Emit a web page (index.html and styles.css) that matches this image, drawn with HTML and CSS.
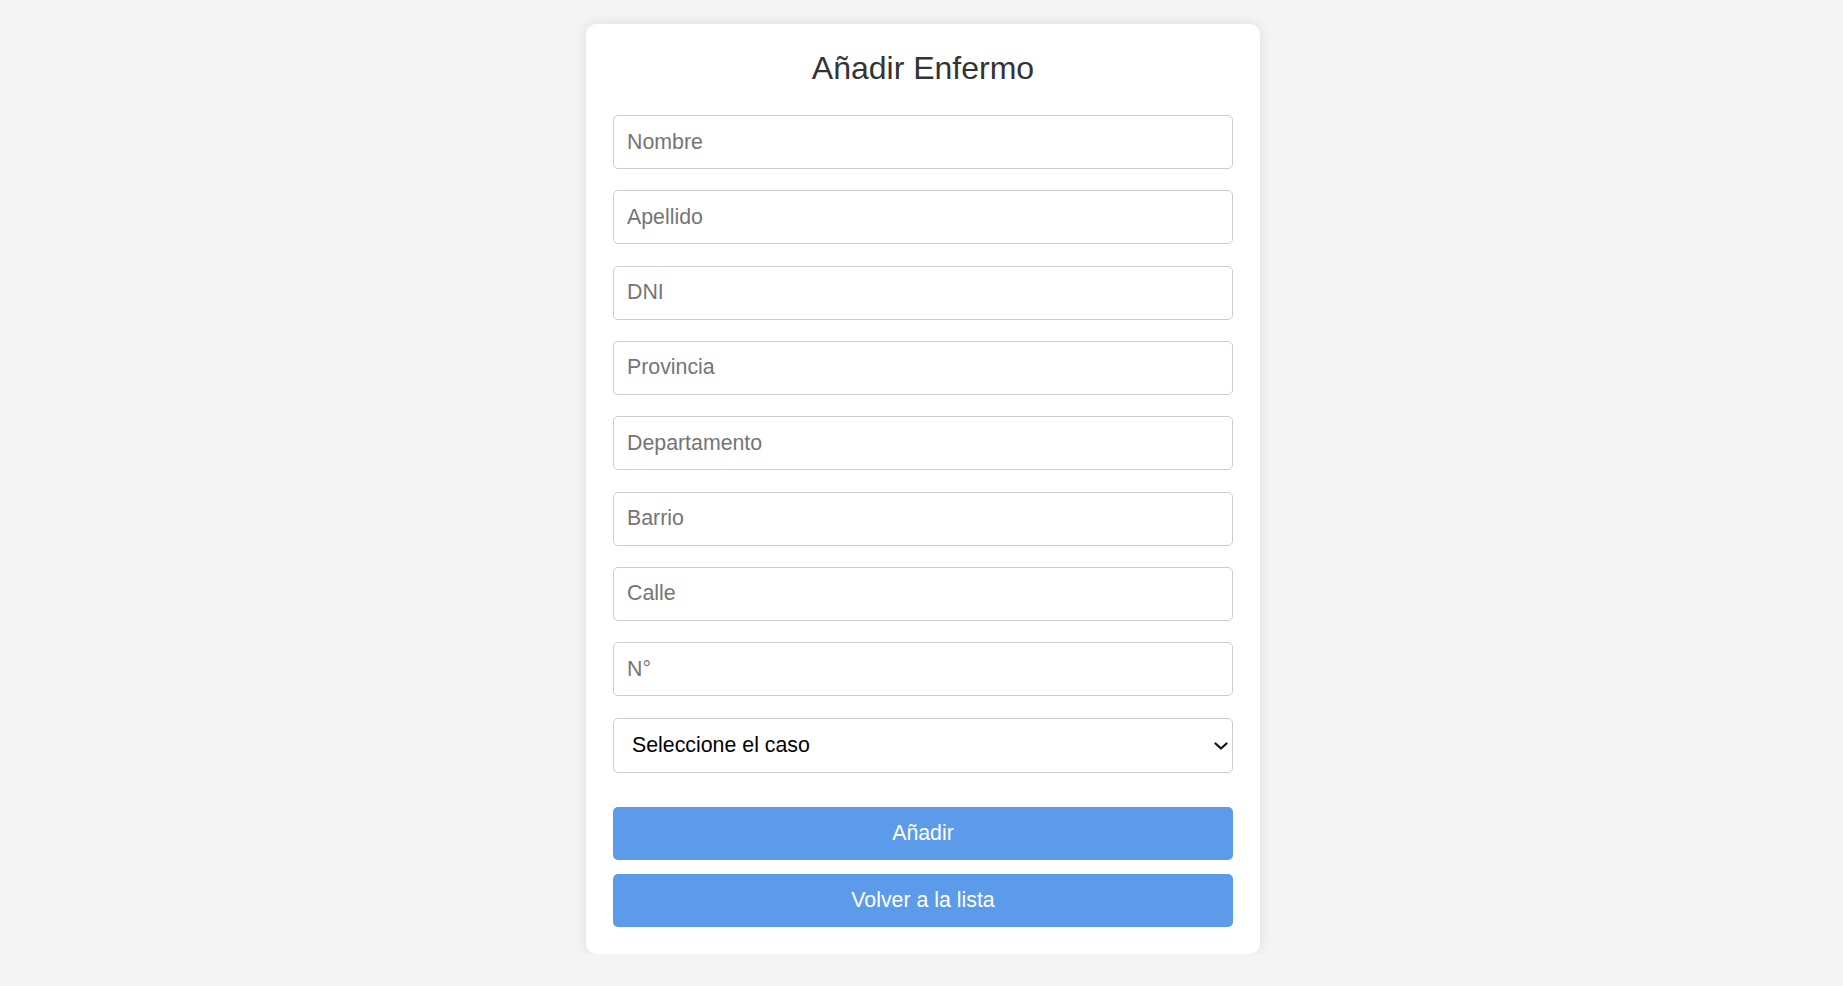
FILE: index.html
```html
<!DOCTYPE html>
<html lang="es">
<head>
<meta charset="utf-8">
<title>Añadir Enfermo</title>
<link rel="stylesheet" href="styles.css">
</head>
<body>
<div class="card">
  <h2 class="title">Añadir Enfermo</h2>
  <form class="form">
    <input class="field" type="text" placeholder="Nombre">
    <input class="field" type="text" placeholder="Apellido">
    <input class="field" type="text" placeholder="DNI">
    <input class="field" type="text" placeholder="Provincia">
    <input class="field" type="text" placeholder="Departamento">
    <input class="field" type="text" placeholder="Barrio">
    <input class="field" type="text" placeholder="Calle">
    <input class="field" type="text" placeholder="N°">
    <div class="select-wrap">
      <select class="field select">
        <option>Seleccione el caso</option>
      </select>
      <svg class="chevron" width="14" height="8" viewBox="0 0 14 8" aria-hidden="true">
        <polyline points="1.5,1.5 7,6.5 12.5,1.5" fill="none" stroke="#111" stroke-width="2.2" stroke-linecap="round" stroke-linejoin="round"/>
      </svg>
    </div>
    <button class="btn btn-first" type="button">Añadir</button>
    <button class="btn" type="button">Volver a la lista</button>
  </form>
</div>
</body>
</html>
```
FILE: styles.css
```css
html, body {
  margin: 0;
  padding: 0;
}
body {
  background: #f4f4f4;
  font-family: "Liberation Sans", Arial, sans-serif;
  padding: 24px 0 0 3px;
}
.card {
  box-sizing: border-box;
  width: 674px;
  margin: 0 auto;
  background: #ffffff;
  border-radius: 10px;
  box-shadow: 0 0 13px rgba(0, 0, 0, 0.1);
  padding: 26px 27px 27px;
}
.title {
  margin: 0 0 29px;
  font-size: 32px;
  font-weight: normal;
  line-height: 36px;
  color: #333333;
  text-align: center;
}
.form {
  display: flex;
  flex-direction: column;
}
.field {
  box-sizing: border-box;
  width: 100%;
  height: 54px;
  margin: 0 0 21.33px;
  padding: 0 13px;
  border: 1px solid #cccccc;
  border-radius: 5px;
  background: #ffffff;
  font-family: "Liberation Sans", Arial, sans-serif;
  font-size: 21.33px;
  color: #000000;
  outline: none;
}
.field::placeholder {
  color: #757575;
}
.select-wrap {
  position: relative;
}
.select {
  display: block;
  height: 55.5px;
  padding: 0 30px 0 18px;
  color: #000000;
  appearance: none;
  -webkit-appearance: none;
}
.chevron {
  position: absolute;
  right: 5px;
  top: 24px;
  pointer-events: none;
}
.btn {
  box-sizing: border-box;
  width: 100%;
  height: 53px;
  border: none;
  border-radius: 5px;
  background: #5c9bea;
  color: #ffffff;
  font-family: "Liberation Sans", Arial, sans-serif;
  font-size: 21.33px;
  cursor: pointer;
  margin: 0;
}
.btn-first {
  margin: 13px 0 13.33px;
}
```
